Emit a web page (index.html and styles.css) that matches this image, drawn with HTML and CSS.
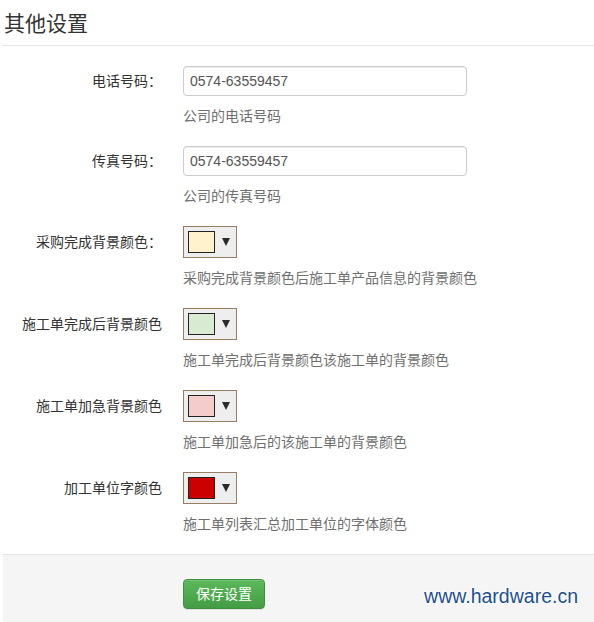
FILE: index.html
```html
<!DOCTYPE html>
<html lang="zh-CN">
<head>
<meta charset="utf-8">
<title>其他设置</title>
<link rel="stylesheet" href="styles.css">
</head>
<body>
<div class="page">
  <h2 class="legend">其他设置</h2>
  <form class="form">
    <div class="row">
      <label class="label">电话号码：</label>
      <div class="control"><input class="input" type="text" value="0574-63559457"></div>
      <p class="help">公司的电话号码</p>
    </div>
    <div class="row">
      <label class="label">传真号码：</label>
      <div class="control"><input class="input" type="text" value="0574-63559457"></div>
      <p class="help">公司的传真号码</p>
    </div>
    <div class="row">
      <label class="label">采购完成背景颜色：</label>
      <div class="control">
        <span class="picker"><span class="swatch swatch-cream"></span><svg class="arrow" width="8" height="8" viewBox="0 0 8 8"><polygon points="0,0 8,0 4,8" fill="#2b2b2b"/></svg></span>
      </div>
      <p class="help">采购完成背景颜色后施工单产品信息的背景颜色</p>
    </div>
    <div class="row">
      <label class="label">施工单完成后背景颜色</label>
      <div class="control">
        <span class="picker"><span class="swatch swatch-green"></span><svg class="arrow" width="8" height="8" viewBox="0 0 8 8"><polygon points="0,0 8,0 4,8" fill="#2b2b2b"/></svg></span>
      </div>
      <p class="help">施工单完成后背景颜色该施工单的背景颜色</p>
    </div>
    <div class="row">
      <label class="label">施工单加急背景颜色</label>
      <div class="control">
        <span class="picker"><span class="swatch swatch-pink"></span><svg class="arrow" width="8" height="8" viewBox="0 0 8 8"><polygon points="0,0 8,0 4,8" fill="#2b2b2b"/></svg></span>
      </div>
      <p class="help">施工单加急后的该施工单的背景颜色</p>
    </div>
    <div class="row">
      <label class="label">加工单位字颜色</label>
      <div class="control">
        <span class="picker"><span class="swatch swatch-red"></span><svg class="arrow" width="8" height="8" viewBox="0 0 8 8"><polygon points="0,0 8,0 4,8" fill="#2b2b2b"/></svg></span>
      </div>
      <p class="help">施工单列表汇总加工单位的字体颜色</p>
    </div>
    <div class="actions">
      <button class="btn-save" type="button">保存设置</button>
      <span class="watermark">www.hardware.cn</span>
    </div>
  </form>
</div>
</body>
</html>
```

FILE: styles.css
```css
html, body {
  margin: 0;
  padding: 0;
  background: #fff;
}

body {
  font-family: "Liberation Sans", "Noto Sans CJK SC", sans-serif;
  font-size: 14px;
  color: #333;
}

.page {
  padding-left: 3px;
  height: 622px;
  display: flex;
  flex-direction: column;
}

.legend {
  margin: 9px 0 20px 0;
  padding: 0 0 6px 1px;
  font-size: 21px;
  line-height: 30px;
  font-weight: normal;
  color: #333;
  border-bottom: 1px solid #e5e5e5;
}

.form {
  margin: 0;
  display: flex;
  flex-direction: column;
  flex: 1;
}

.row {
  display: grid;
  grid-template-columns: 159px 1fr;
  column-gap: 21px;
  margin-bottom: 20px;
}

.label {
  grid-column: 1;
  grid-row: 1;
  align-self: center;
  text-align: right;
  color: #333;
  line-height: 20px;
}

.control {
  grid-column: 2;
  grid-row: 1;
  display: flex;
}

.input {
  box-sizing: border-box;
  width: 284px;
  height: 30px;
  padding: 0 6px;
  margin: 0;
  border: 1px solid #ccc;
  border-radius: 4px;
  box-shadow: inset 0 1px 1px rgba(0, 0, 0, 0.075);
  font-family: "Liberation Sans", "Noto Sans CJK SC", sans-serif;
  font-size: 14px;
  color: #555;
  background: #fff;
}

.help {
  grid-column: 2;
  grid-row: 2;
  margin: 10px 0 0 0;
  line-height: 20px;
  color: #6f6f6f;
}

.picker {
  box-sizing: border-box;
  width: 54px;
  height: 32px;
  padding: 4px 6px 4px 4px;
  border: 1px solid #977d62;
  background: #eeeeee;
  display: flex;
  align-items: center;
  justify-content: space-between;
}

.swatch {
  box-sizing: border-box;
  width: 27px;
  height: 22px;
  border: 1px solid #222;
}

.swatch-cream { background: #fff2cc; }
.swatch-green { background: #d9ead3; }
.swatch-pink { background: #f4cccc; }
.swatch-red { background: #cc0000; }

.arrow {
  display: block;
  margin-top: -1px;
}

.actions {
  position: relative;
  flex: 1;
  margin-top: 0;
  border-top: 1px solid #e5e5e5;
  background: #f5f5f5;
  padding: 24px 0 0 180px;
}

.btn-save {
  box-sizing: border-box;
  height: 30px;
  padding: 0 12px;
  border: 1px solid #3e8f3e;
  border-radius: 4px;
  background: linear-gradient(to bottom, #5cb85c 0%, #449d44 100%);
  color: #fff;
  font-family: "Liberation Sans", "Noto Sans CJK SC", sans-serif;
  font-size: 14px;
  line-height: 28px;
  box-shadow: inset 0 1px 0 rgba(255, 255, 255, 0.15), 0 1px 1px rgba(0, 0, 0, 0.075);
}

.watermark {
  position: absolute;
  right: 16px;
  top: 30px;
  font-family: "Liberation Sans", Arial, sans-serif;
  font-size: 19.5px;
  line-height: 22px;
  color: #1d4e8f;
  text-shadow: 0 0 2px #fff, 0 0 2px #fff, 1px 1px 1px #fff, -1px -1px 1px #fff;
}
```
